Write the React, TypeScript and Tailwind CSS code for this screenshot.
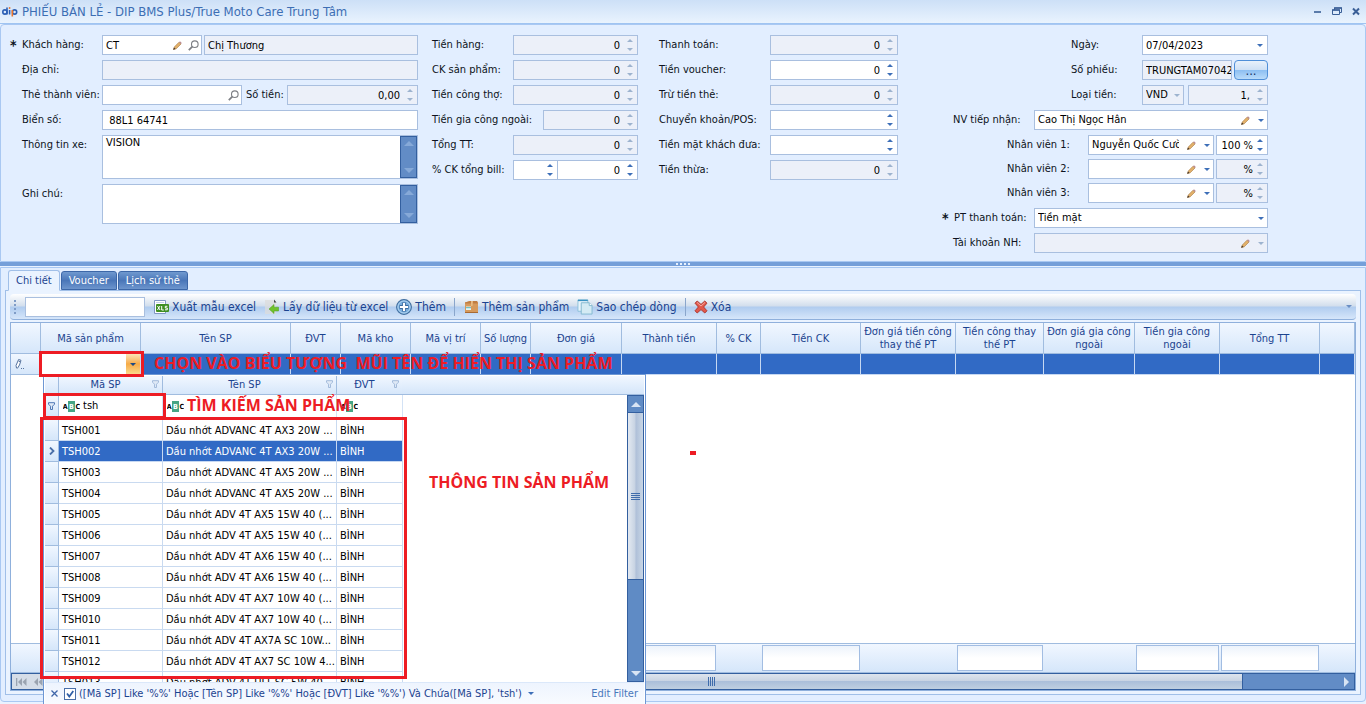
import React from "react";

const FONT = "font-['DejaVu_Sans_Condensed','DejaVu_Sans',sans-serif]";

type Kids = { children?: React.ReactNode };

function Tri({ dir, color, big }: { dir: "up" | "down" | "right"; color: string; big?: boolean }) {
  const d =
    dir === "up" ? "M0 4L4 0L8 4Z" : dir === "down" ? "M0 0L4 4L8 0Z" : "M0 0L4 4L0 8Z";
  const w = dir === "right" ? 4 : 8;
  const h = dir === "right" ? 8 : 4;
  const k = big ? 1.25 : 0.75;
  return (
    <svg width={w * k} height={h * k} viewBox={`0 0 ${w} ${h}`} className="shrink-0" aria-hidden="true">
      <path d={d} fill={color} />
    </svg>
  );
}

function Pencil() {
  return (
    <svg width="9" height="9" viewBox="0 0 9 9" className="shrink-0" aria-hidden="true">
      <path d="M0.5 8.5L1.3 6L6 1.2L8 3L3.2 7.8Z" fill="#e2b06a" stroke="#a8783c" strokeWidth="0.6" />
      <path d="M6 1.2L7 0.3L8.8 2L8 3Z" fill="#b98a90" />
      <path d="M0.2 8.8L1 6.6L2.6 8Z" fill="#40342a" />
    </svg>
  );
}

function Lens() {
  return (
    <svg width="11" height="11" viewBox="0 0 11 11" className="shrink-0" aria-hidden="true">
      <circle cx="6.8" cy="4.2" r="3.3" fill="#fff" stroke="#7d7f84" strokeWidth="1.1" />
      <path d="M4.3 6.7L0.8 10.2" stroke="#7d7f84" strokeWidth="1.7" />
    </svg>
  );
}

function Spin({ off }: { off?: boolean }) {
  const c = off ? "#9db3cf" : "#3d6fb8";
  return (
    <span className="flex w-3 shrink-0 flex-col items-center gap-1.5">
      <Tri dir="up" color={c} />
      <Tri dir="down" color={c} />
    </span>
  );
}

function Box({ off, className = "", children }: Kids & { off?: boolean; className?: string }) {
  return (
    <div
      className={`flex h-5 min-w-0 items-center border border-[#a9bfdf] pl-[3px] ${off ? "bg-[#ecf0f9]" : "bg-white"} ${className}`}
    >
      {children}
    </div>
  );
}

function Text({ id, value = "", off, right, label }: { id?: string; value?: string; off?: boolean; right?: boolean; label?: string }) {
  return (
    <input
      id={id}
      aria-label={label}
      defaultValue={value}
      readOnly={off}
      className={`h-full w-0 min-w-0 flex-1 bg-transparent text-black outline-none ${right ? "text-right" : ""}`}
    />
  );
}

function NumBox({ id, value = "0", off, className, label, tight }: { id?: string; value?: string; off?: boolean; className?: string; label?: string; tight?: boolean }) {
  return (
    <Box off={off} className={`pr-px ${tight ? "gap-px" : "gap-1"} ${className ?? ""}`}>
      <Text id={id} value={value} off={off} right label={label} />
      <Spin off={off} />
    </Box>
  );
}

function Combo({ id, value, off, pencil, className }: { id: string; value: string; off?: boolean; pencil?: boolean; className: string }) {
  return (
    <Box off={off} className={`pr-[3px] ${pencil ? "gap-2" : "gap-1"} ${className}`}>
      <select id={id} defaultValue={value} disabled={off} className="h-full w-0 min-w-0 flex-1 appearance-none bg-transparent text-black opacity-100 outline-none">
        <option value={value}>{value}</option>
      </select>
      {pencil && <Pencil />}
      <Tri dir="down" color={off ? "#9db3cf" : "#3d6fb8"} />
    </Box>
  );
}

function Lab({ htmlFor, className, star, children }: Kids & { htmlFor: string; className: string; star?: boolean }) {
  return (
    <label htmlFor={htmlFor} className={`flex h-5 shrink-0 items-center whitespace-nowrap text-[#0d1320] ${className}`}>
      {star && <span className="w-3 shrink-0 text-[14px] font-bold leading-none">*</span>}
      {children}
    </label>
  );
}

function Area({ id, value, className }: { id: string; value: string; className: string }) {
  return (
    <div className={`flex flex-1 border border-[#a9bfdf] bg-white ${className}`}>
      <textarea id={id} defaultValue={value} className="h-full min-w-0 flex-1 resize-none bg-transparent pl-[3px] text-black outline-none" />
      <div className="flex w-[17px] flex-col items-center justify-between border border-[#335f9f] bg-[#628cc6] py-1">
        <Tri dir="up" color="#86a9d8" big />
        <Tri dir="down" color="#86a9d8" big />
      </div>
    </div>
  );
}

const sums = [
  ["Tiền hàng:", false],
  ["CK sản phẩm:", false],
  ["Tiền công thợ:", false],
  ["Tiền gia công ngoài:", true],
  ["Tổng TT:", false],
] as const;

const pays = [
  ["Thanh toán:", "0", true],
  ["Tiền voucher:", "0", false],
  ["Trừ tiền thẻ:", "0", true],
  ["Chuyển khoản/POS:", "", false],
  ["Tiền mặt khách đưa:", "", false],
  ["Tiền thừa:", "0", true],
] as const;

function Form() {
  return (
    <section className="flex h-[238px] shrink-0 items-start rounded-t-sm border border-[#a9c8f2] bg-[#e2eeff] pl-[9px] pr-[97px] pt-2.5">
      <div className="flex w-[408px] flex-col gap-[5px]">
        <div className="flex">
          <Lab htmlFor="kh" className="w-[92px]" star>Khách hàng:</Lab>
          <Box className="w-[100px] gap-1.5 pr-0.5">
            <Text id="kh" value="CT" />
            <Pencil />
            <Lens />
          </Box>
          <Box off className="ml-0.5 flex-1"><Text value="Chị Thương" off label="Tên khách hàng" /></Box>
        </div>
        <div className="flex pl-3">
          <Lab htmlFor="dc" className="w-20">Địa chỉ:</Lab>
          <Box off className="flex-1"><Text id="dc" off /></Box>
        </div>
        <div className="flex pl-3">
          <Lab htmlFor="the" className="w-20">Thẻ thành viên:</Lab>
          <Box className="w-[140px] pr-0.5"><Text id="the" /><Lens /></Box>
          <Lab htmlFor="sotien" className="w-[45px] pl-1">Số tiền:</Lab>
          <NumBox id="sotien" value="0,00" off className="flex-1" />
        </div>
        <div className="flex pl-3">
          <Lab htmlFor="bien" className="w-20">Biển số:</Lab>
          <Box className="flex-1"><Text id="bien" value=" 88L1 64741" /></Box>
        </div>
        <div className="flex pl-3">
          <Lab htmlFor="xe" className="w-20">Thông tin xe:</Lab>
          <Area id="xe" value="VISION" className="h-11" />
        </div>
        <div className="flex pl-3">
          <Lab htmlFor="ghichu" className="w-20">Ghi chú:</Lab>
          <Area id="ghichu" value="" className="h-10" />
        </div>
      </div>

      <div className="ml-3.5 flex w-[206px] flex-col gap-[5px]">
        {sums.map(([t, wide], i) => (
          <div key={t} className="flex">
            <Lab htmlFor={`s${i}`} className={wide ? "w-[111px]" : "w-[81px]"}>{t}</Lab>
            <NumBox id={`s${i}`} off className="flex-1" />
          </div>
        ))}
        <div className="flex">
          <Lab htmlFor="ck" className="w-[81px]">% CK tổng bill:</Lab>
          <NumBox id="ck" value="" className="w-[45px]" />
          <NumBox className="-ml-px flex-1" label="Tiền CK tổng bill" />
        </div>
      </div>

      <div className="ml-[21px] flex w-[239px] flex-col gap-[5px]">
        {pays.map(([t, v, off], i) => (
          <div key={t} className="flex">
            <Lab htmlFor={`p${i}`} className="w-[111px]">{t}</Lab>
            <NumBox id={`p${i}`} value={v} off={off} className="flex-1" />
          </div>
        ))}
      </div>

      <div className="ml-auto flex w-[326px] flex-col items-end gap-[5px]">
        <div className="flex">
          <Lab htmlFor="ngay" className="w-[71px]">Ngày:</Lab>
          <Box className="w-[126px] pr-1"><Text id="ngay" value="07/04/2023" /><Tri dir="down" color="#3d6fb8" /></Box>
        </div>
        <div className="flex">
          <Lab htmlFor="sp" className="w-[71px]">Số phiếu:</Lab>
          <Box off className="w-[90px]"><Text id="sp" value="TRUNGTAM070423" off /></Box>
          <button className="ml-0.5 h-5 w-[34px] rounded-sm border border-[#4f8fd8] bg-[linear-gradient(#e8f1fb,#cfe1f5_48%,#8dbff2_52%,#b9dbfa)] text-[13px] leading-none text-[#16335f]">...</button>
        </div>
        <div className="flex">
          <Lab htmlFor="lt" className="w-[71px]">Loại tiền:</Lab>
          <Combo id="lt" value="VND" off className="w-[42px]" />
          <NumBox value="1," off className="ml-1 w-20" label="Tỷ giá" />
        </div>
        <div className="flex">
          <Lab htmlFor="nv" className="w-[81px]">NV tiếp nhận:</Lab>
          <Combo id="nv" value="Cao Thị Ngọc Hân" pencil className="w-[234px]" />
        </div>
        <div className="flex flex-col gap-1">
          {["Nguyễn Quốc Cường", "", ""].map((v, i) => (
            <div key={i} className="flex">
              <Lab htmlFor={`nv${i}`} className="w-[81px]">Nhân viên {i + 1}:</Lab>
              <Combo id={`nv${i}`} value={v} pencil className="w-[126px]" />
              <NumBox value={i === 0 ? "100 %" : "%"} off={i > 0} tight className="ml-0.5 w-[52px]" label={`Tỷ lệ nhân viên ${i + 1}`} />
            </div>
          ))}
        </div>
        <div className="flex">
          <Lab htmlFor="pt" className="w-[92px]" star>PT thanh toán:</Lab>
          <Combo id="pt" value="Tiền mặt" className="w-[234px]" />
        </div>
        <div className="flex">
          <Lab htmlFor="tk" className="w-[81px]">Tài khoản NH:</Lab>
          <Combo id="tk" value="" off pencil className="w-[234px]" />
        </div>
      </div>
    </section>
  );
}

function XlsIcon() {
  return (
    <svg width="16" height="16" viewBox="0 0 16 16" aria-hidden="true">
      <path d="M1.5 1.5H12.5V14.5H1.5Z" fill="#fff" stroke="#8197c4" />
      <path d="M3 3.5H11" stroke="#c7d3ea" />
      <rect x="3" y="5" width="13" height="8" rx="1" fill="#3f8f22" />
      <path d="M4.5 7L7 11M7 7L4.5 11M8.7 7V11H10.8M14.4 7.3H12.3V9H14.3V10.8H12" stroke="#fff" fill="none" strokeWidth="1" />
    </svg>
  );
}
function ImportIcon() {
  return (
    <svg width="16" height="16" viewBox="0 0 16 16" aria-hidden="true">
      <path d="M1 1H10L12 3V15H1Z" fill="#dcdcdc" opacity="0.75" />
      <path d="M10 0.5V3.5H12.5Z" fill="#444" />
      <path d="M5 10L10 5.5V8.2H14.5V12H10V14.5Z" fill="#6fc22c" stroke="#4d9a1b" strokeWidth="0.5" />
    </svg>
  );
}
function PlusIcon() {
  return (
    <svg width="16" height="16" viewBox="0 0 16 16" aria-hidden="true">
      <circle cx="8" cy="8" r="7.4" fill="#79aede" stroke="#426f9f" strokeWidth="1.1" />
      <circle cx="8" cy="8" r="6.1" fill="none" stroke="#c3dff5" strokeWidth="0.8" />
      <path d="M8 3.5V12.5M3.5 8H12.5" stroke="#3a6b9f" strokeWidth="4" />
      <path d="M8 4V12M4 8H12" stroke="#fff" strokeWidth="2.2" />
    </svg>
  );
}
function CrateIcon() {
  return (
    <svg width="16" height="16" viewBox="0 0 16 16" aria-hidden="true">
      <path d="M2 3.5L7 2H14L15 4V13.5H2Z" fill="#d69a5c" />
      <path d="M2 3.5L7 2H14L15 4.5H2Z" fill="#c07d42" />
      <path d="M8 2H10L9.5 7H8Z" fill="#e9bc82" />
      <rect x="3" y="7.5" width="5" height="3.5" fill="#e6f4f3" />
      <path d="M3 8.7H8" stroke="#55b5b8" />
      <path d="M2 13.5H15" stroke="#a86a33" />
    </svg>
  );
}
function CopyIcon() {
  return (
    <svg width="16" height="16" viewBox="0 0 17 16" aria-hidden="true">
      <path d="M1 0.5H11.5V12.5H1Z" fill="#e8f4fb" stroke="#8cc0da" />
      <path d="M1 1H11.5" stroke="#3b93c2" strokeWidth="1.5" />
      <path d="M4.5 3.5H13L16 6.5V15.5H4.5Z" fill="#d4ebf4" stroke="#82b9d0" />
      <path d="M13 3.5V6.5H16" fill="#fff" stroke="#82b9d0" />
    </svg>
  );
}
function DelIcon() {
  return (
    <svg width="14" height="14" viewBox="0 0 14 14" aria-hidden="true">
      <path d="M1 3.2L3.2 1L7 4.4L10.8 1L13 3.2L9.6 7L13 10.8L10.8 13L7 9.6L3.2 13L1 10.8L4.4 7Z" fill="#e2574a" stroke="#a93229" strokeWidth="0.9" />
      <path d="M3 2.4L7 6L11 2.4" stroke="#f5a79d" fill="none" />
    </svg>
  );
}
function Funnel({ className = "" }: { className?: string }) {
  return (
    <svg width="7" height="8" viewBox="0 0 7 8" className={className} aria-hidden="true">
      <path d="M0.5 0.7H6.5V2.2L4.5 4.2V7.5H2.5V4.2L0.5 2.2Z" fill="#dfe9f6" stroke="currentColor" strokeWidth="1" />
    </svg>
  );
}
function Abc() {
  return (
    <svg width="17" height="11" viewBox="0 0 17 11" className="shrink-0" aria-hidden="true">
      <rect x="5" width="7" height="11" fill="#46a584" />
      <g fontFamily="DejaVu Sans Condensed, sans-serif" fontSize="7" fontWeight="700" textAnchor="middle">
        <text x="2.2" y="8">A</text>
        <text x="8.5" y="8" fill="#fff">B</text>
        <text x="14.8" y="8">C</text>
      </g>
    </svg>
  );
}

function ToolBtn({ icon, children }: Kids & { icon: React.ReactNode }) {
  return (
    <button className="flex items-center gap-[3px] whitespace-nowrap text-[12px] text-[#1b438f]">
      {icon}
      {children}
    </button>
  );
}
const Sep = () => <span className="h-[18px] w-px bg-[#8aa6cc]" />;

function Toolbar() {
  return (
    <div className="flex h-[26px] shrink-0 items-center rounded-sm border-b border-[#8fb0dc] bg-[linear-gradient(#ffffff,#d2deec_48%,#b0ccef_52%,#d6e6fa)] px-1">
      <span className="mr-[9px] flex flex-col gap-0.5">
        {[0, 1, 2, 3].map((i) => <span key={i} className="size-0.5 bg-[#7f9cc7]" />)}
      </span>
      <input aria-label="Tìm" className="h-5 w-[120px] border border-[#a9bfdf] bg-white px-1 outline-none" />
      <div className="ml-2 flex items-center gap-2">
        <ToolBtn icon={<XlsIcon />}>Xuất mẫu excel</ToolBtn>
        <ToolBtn icon={<ImportIcon />}>Lấy dữ liệu từ excel</ToolBtn>
        <ToolBtn icon={<PlusIcon />}>Thêm</ToolBtn>
        <Sep />
        <ToolBtn icon={<CrateIcon />}>Thêm sản phẩm</ToolBtn>
        <ToolBtn icon={<CopyIcon />}>Sao chép dòng</ToolBtn>
        <Sep />
        <ToolBtn icon={<DelIcon />}>Xóa</ToolBtn>
      </div>
      <span className="ml-auto"><Tri dir="down" color="#6b8fc4" /></span>
    </div>
  );
}

const cols: [string, number][] = [
  ["", 30], ["Mã sản phẩm", 100], ["Tên SP", 150], ["ĐVT", 50], ["Mã kho", 70], ["Mã vị trí", 70],
  ["Số lượng", 50], ["Đơn giá", 91], ["Thành tiền", 95], ["% CK", 44], ["Tiền CK", 100],
  ["Đơn giá tiền công thay thế PT", 95], ["Tiền công thay thế PT", 88], ["Đơn giá gia công ngoài", 91],
  ["Tiền gia công ngoài", 85], ["Tổng TT", 100], ["", 0],
];
const totals = [8, 10, 12, 14, 15];

const products = [
  ["TSH001", "Dầu nhớt ADVANC 4T AX3 20W ..."],
  ["TSH002", "Dầu nhớt ADVANC 4T AX3 20W ..."],
  ["TSH003", "Dầu nhớt ADVANC 4T AX5 20W ..."],
  ["TSH004", "Dầu nhớt ADVANC 4T AX5 20W ..."],
  ["TSH005", "Dầu nhớt ADV 4T AX5 15W 40 (..."],
  ["TSH006", "Dầu nhớt ADV 4T AX5 15W 40 (..."],
  ["TSH007", "Dầu nhớt ADV 4T AX6 15W 40 (..."],
  ["TSH008", "Dầu nhớt ADV 4T AX6 15W 40 (..."],
  ["TSH009", "Dầu nhớt ADV 4T AX7 10W 40 (..."],
  ["TSH010", "Dầu nhớt ADV 4T AX7 10W 40 (..."],
  ["TSH011", "Dầu nhớt ADV 4T AX7A SC 10W..."],
  ["TSH012", "Dầu nhớt ADV 4T AX7 SC 10W 4..."],
  ["TSH013", "Dầu nhớt ADV 4T ULT SC 5W 40"],
];

const HEAD = "bg-linear-to-b from-[#f1f7ff] to-[#d5e6fa]";

function Popup() {
  return (
    <div className="absolute left-8 top-[51px] flex h-[331px] w-[603px] flex-col border border-[#6d97d4] bg-white p-px pb-0">
      <div className="flex min-h-0 flex-1">
        <div className="min-w-0 flex-1 overflow-hidden">
          <table className="w-[358px] table-fixed border-separate border-spacing-0">
            <colgroup>
              <col className="w-[14px]" /><col className="w-[104px]" /><col className="w-[174px]" /><col className="w-[66px]" />
            </colgroup>
            <thead>
              <tr className={`h-[19px] ${HEAD}`}>
                <th className="border-b border-r border-[#a0bcdf]" />
                {["Mã SP", "Tên SP", "ĐVT"].map((t) => (
                  <th key={t} className="border-b border-r border-[#a0bcdf] p-0 font-normal text-[#1b438f]">
                    <span className="flex items-start pr-[3px]">
                      <span className="flex-1 text-center">{t}</span>
                      <Funnel className="mt-0.5 text-[#a3bbdb]" />
                    </span>
                  </th>
                ))}
              </tr>
              <tr className="h-[22px]">
                <td className={`border-r border-[#a0bcdf] p-0 ${HEAD}`}><Funnel className="mx-auto text-[#4f78b5]" /></td>
                {["tsh", "", ""].map((v, i) => (
                  <td key={i} className="border-r border-[#d3e2f5] p-0 pl-1">
                    <span className="flex items-center gap-[3px]">
                      <Abc />
                      <input aria-label={`Lọc cột ${i + 1}`} defaultValue={v} className="w-0 min-w-0 flex-1 bg-transparent outline-none" />
                    </span>
                  </td>
                ))}
              </tr>
              <tr className="h-[3px]"><td colSpan={4} className="border-t border-[#a0bcdf] bg-[#d8e7fa] p-0" /></tr>
            </thead>
            <tbody>
              {products.map(([code, name], i) => {
                const sel = i === 1;
                const cell = `whitespace-nowrap border-b border-r p-0 pl-[3px] pt-px ${sel ? "border-[#c6d8f2] bg-[#316ac5] text-white" : "border-[#c9daf0] text-black"}`;
                return (
                  <tr key={code} className="h-[21px]">
                    <td className={`border-b border-r border-[#a0bcdf] p-0 ${HEAD}`}>
                      {sel && (
                        <svg width="6" height="8" viewBox="0 0 6 8" className="mx-auto" aria-hidden="true">
                          <path d="M1 0.5L4.5 4L1 7.5" fill="none" stroke="#4a6fa8" strokeWidth="1.8" />
                        </svg>
                      )}
                    </td>
                    <td className={cell}>{code}</td>
                    <td className={cell}>{name}</td>
                    <td className={cell}>BÌNH</td>
                  </tr>
                );
              })}
            </tbody>
          </table>
        </div>
        <div className="-ml-[225px] flex w-[242px] flex-col">
          <div className={`h-[19px] w-full border-b border-[#a0bcdf] ${HEAD}`} />
          <div className="ml-auto flex w-[17px] flex-1 flex-col items-center border border-[#335f9f] bg-[#5f8bc5]">
            <div className="flex h-4 items-center"><Tri dir="up" color="#d8e4f4" big /></div>
            <div className="flex h-[168px] w-full items-center justify-center border-y border-[#335f9f] bg-[linear-gradient(90deg,#e3e9f1,#c6d2e2_48%,#aebfd8_52%,#c8d6e6)]">
              <span className="flex w-[9px] flex-col gap-px">
                {[0, 1, 2, 3].map((i) => <span key={i} className="h-px bg-[#3f6cab]" />)}
              </span>
            </div>
            <div className="mt-auto flex h-4 items-center"><Tri dir="down" color="#d8e4f4" big /></div>
          </div>
        </div>
      </div>
      <div className="flex h-[22px] shrink-0 items-center border-t border-[#dbe8fa] bg-linear-to-b from-[#eef4fe] to-[#f8fbff] px-1.5 text-[#1b438f]">
        <button aria-label="Xóa bộ lọc" className="mr-1.5">
          <svg width="7" height="7" viewBox="0 0 7 7" aria-hidden="true"><path d="M0.5 0.5L6.5 6.5M6.5 0.5L0.5 6.5" stroke="#3f66a8" strokeWidth="1.3" /></svg>
        </button>
        <label className="flex items-center gap-[3px] whitespace-nowrap">
          <span className="relative flex size-3">
            <input type="checkbox" defaultChecked className="size-3 appearance-none border border-[#4a6fa8] bg-white" />
            <svg width="8" height="8" viewBox="0 0 8 8" className="pointer-events-none absolute left-0.5 top-0.5" aria-hidden="true">
              <path d="M1 3.5L3.3 6.5L7.3 1" fill="none" stroke="#2f5ea5" strokeWidth="1.8" />
            </svg>
          </span>
          ([Mã SP] Like '%%' Hoặc [Tên SP] Like '%%' Hoặc [ĐVT] Like '%%') Và Chứa([Mã SP], 'tsh')
        </label>
        <span className="ml-1.5"><Tri dir="down" color="#3d6fb8" /></span>
        <a href="#filter" className="ml-auto text-[#4a78bb]">Edit Filter</a>
      </div>
    </div>
  );
}

const NOTE = "absolute whitespace-pre font-['Open_Sans',sans-serif] text-[16px] font-bold leading-5 text-[#ed1c24]";

function Grid() {
  return (
    <div className="relative mt-0.5 flex flex-1 flex-col border border-[#8fb0dc] bg-white">
      <table className="w-full table-fixed border-separate border-spacing-0">
        <colgroup>
          {cols.map(([, w], i) => <col key={i} style={w ? { width: w } : undefined} />)}
        </colgroup>
        <thead>
          <tr className={`h-[31px] ${HEAD}`}>
            {cols.map(([t], i) => (
              <th key={i} className="border-b border-r border-[#a0bcdf] p-0 font-normal leading-[13px] text-[#1b438f]">{t}</th>
            ))}
          </tr>
        </thead>
        <tbody>
          <tr className="h-[21px]">
            <td className={`border-b border-r border-[#a0bcdf] p-0 pl-1 ${HEAD}`}>
              <svg width="9" height="12" viewBox="0 0 9 12" aria-hidden="true">
                <path d="M1.5 10L1 7.5L3.6 1.5L6 2.3L4.5 7L2.5 10.2ZM3.5 3L5.3 3.8" fill="#fff" stroke="#55739f" />
                <path d="M6 10.5H7M8 10.5H9" stroke="#55739f" />
              </svg>
            </td>
            <td className="border-b border-r border-[#c6d8f2] bg-white p-0">
              <div className="flex h-5">
                <input aria-label="Mã sản phẩm" className="w-0 min-w-0 flex-1 px-1 outline-none" />
                <button aria-label="Mở danh sách" className="flex w-[14px] items-center justify-center bg-linear-to-b from-[#fbe3b4] via-[#f6ab45] to-[#fbd98a]">
                  <Tri dir="down" color="#1d4a86" />
                </button>
              </div>
            </td>
            {cols.slice(2).map((_, i) => (
              <td key={i} className="border-b border-r border-[#c6d8f2] bg-[#316ac5] p-0" />
            ))}
          </tr>
        </tbody>
      </table>

      <div className="flex-1" />

      <div className={`flex h-[30px] border-y border-[#a0bcdf] py-px ${HEAD}`}>
        {cols.slice(0, 16).map(([, w], i) => (
          <div key={i} className="shrink-0 px-px" style={{ width: w }}>
            {totals.includes(i) && <div className="h-full border border-[#a2bde2] bg-linear-to-b from-[#edf3fb] to-white to-50%" />}
          </div>
        ))}
      </div>
      <div className="flex h-[17px] border border-[#335f9f] bg-[#628cc6]">
        <div className="flex w-[60px] items-center gap-2 bg-[#d5dde8] pl-1">
          <svg width="28" height="8" viewBox="0 0 28 8" aria-hidden="true">
            <path d="M0 0H1.3V8H0ZM6 0V8L2 4ZM10.5 0V8L6.5 4ZM22 0V8L18 4ZM26.5 0V8L22.5 4Z" fill="#9aa3b0" />
          </svg>
        </div>
        <div className="flex flex-1 items-center border-r border-[#335f9f] bg-[linear-gradient(#dde4ed,#c9d4e3_45%,#abbfda_50%,#bfcfe0)]">
          <span className="ml-[636px] flex h-[9px] gap-px">
            {[0, 1, 2, 3].map((i) => <span key={i} className="w-px bg-[#3f6cab]" />)}
          </span>
        </div>
        <div className="flex w-[111px] items-center justify-end pr-[5px]"><Tri dir="right" color="#d8e4f4" big /></div>
      </div>

      <Popup />

      <div className="absolute left-7 top-7 h-[26px] w-[105px] border-3 border-[#ed1c24]" />
      <div className="absolute left-8 top-[70px] h-[26px] w-[123px] border-3 border-[#ed1c24]" />
      <div className="absolute left-[29px] top-[94px] h-[262px] w-[367px] border-3 border-[#ed1c24]" />
      <p className={`${NOTE} left-[143px] top-[30px]`}>{"CHỌN VÀO BIỂU TƯỢNG  MŨI TÊN ĐỂ HIỂN THỊ SẢN PHẨM"}</p>
      <p className={`${NOTE} left-44 top-[72px]`}>TÌM KIẾM SẢN PHẨM</p>
      <p className={`${NOTE} left-[418px] top-[149px]`}>THÔNG TIN SẢN PHẨM</p>
      <div className="absolute left-[679px] top-32 h-1 w-1.5 bg-[#ed1c24]" />
    </div>
  );
}

function Tab({ on, children }: Kids & { on?: boolean }) {
  return (
    <button
      role="tab"
      aria-selected={!!on}
      className={`rounded-t-[3px] border px-[7px] ${on ? "relative -mb-px h-[21px] border-[#a0bfe8] border-b-[#eaf3ff] bg-[#eaf3ff] text-[#1b438f]" : "mt-px h-[19px] border-[#3c67a8] bg-linear-to-b from-[#7099cf] via-[#4a76b8] to-[#6d95cd] text-white"}`}
    >
      {children}
    </button>
  );
}

export default function App() {
  return (
    <main className={`flex min-h-screen flex-col overflow-hidden bg-[#e9f2ff] text-[11px] leading-[14px] ${FONT}`}>
      <header className="flex h-6 shrink-0 items-center border-b border-[#9fc4f2] bg-linear-to-b from-[#cde0f7] to-[#e9f3fe] px-0.5">
        <svg width="17" height="10" viewBox="0 0 17 10" aria-hidden="true">
          <g fill="none" strokeWidth="1.6">
            <circle cx="2.9" cy="5" r="2.1" stroke="#2c5fb4" />
            <path d="M5 0.5V7.5M7.6 3V7.5" stroke="#2c5fb4" />
            <circle cx="12.6" cy="5" r="2.1" stroke="#2c5fb4" />
            <path d="M10.3 3V9.5" stroke="#e8742c" />
          </g>
          <circle cx="7.6" cy="1" r="0.9" fill="#e8742c" />
        </svg>
        <h1 className="ml-[3px] text-[13px] text-[#3c6eb4]">PHIẾU BÁN LẺ - DIP BMS Plus/True Moto Care Trung Tâm</h1>
        <div className="ml-auto flex items-center gap-2.5 pr-1 text-[#3a5f97]">
          <button aria-label="Thu nhỏ">
            <svg width="9" height="9" viewBox="0 0 9 9" aria-hidden="true"><path d="M1 5H8" stroke="currentColor" strokeWidth="1.6" /></svg>
          </button>
          <button aria-label="Khôi phục">
            <svg width="10" height="9" viewBox="0 0 10 9" aria-hidden="true"><path d="M2.5 3V1H9.5V5.5H7.5M0.5 3H7.5V7.5H0.5Z" fill="none" stroke="currentColor" /><path d="M2 1H10M0 3H8" stroke="currentColor" strokeWidth="1.6" /></svg>
          </button>
          <button aria-label="Đóng">
            <svg width="8" height="9" viewBox="0 0 8 9" aria-hidden="true"><path d="M1 1.5L7 7.5M7 1.5L1 7.5" stroke="currentColor" strokeWidth="2" /></svg>
          </button>
        </div>
      </header>

      <Form />

      <div className="flex h-1 shrink-0 items-center justify-center gap-0.5 bg-[#759fd9]">
        {[0, 1, 2, 3].map((i) => <span key={i} className="size-0.5 bg-[#e8f1fd]" />)}
      </div>

      <section className="mb-0.5 mt-px flex flex-1 flex-col rounded-b-sm border border-[#a9c8f2] bg-[#e2eeff] px-1 pb-1.5 pt-0.5">
        <div role="tablist" className="flex gap-px pl-[3px]">
          <Tab on>Chi tiết</Tab>
          <Tab>Voucher</Tab>
          <Tab>Lịch sử thẻ</Tab>
        </div>
        <div className="flex flex-1 flex-col border border-[#a0bfe8] bg-[#eaf3ff] px-1 py-[3px]">
          <Toolbar />
          <Grid />
        </div>
      </section>
    </main>
  );
}
